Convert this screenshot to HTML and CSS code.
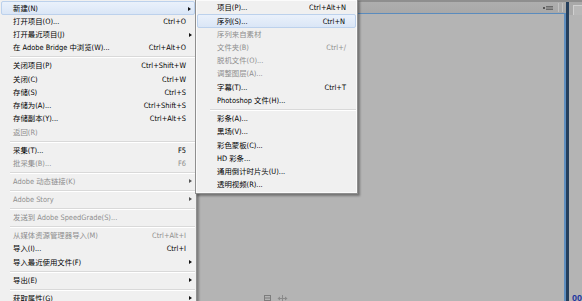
FILE: index.html
```html
<!DOCTYPE html>
<html lang="zh-CN">
<head>
<meta charset="utf-8">
<title>文件菜单</title>
<link rel="stylesheet" href="styles.css">
</head>
<body>
<div class="workspace">
  <div class="topstrip"></div>
  <div class="panels">
    <div class="main-panel">
      <div class="panel-head">
        <svg class="panel-menu" width="10" height="4" viewBox="0 0 10 4"><rect x="0" y="1" width="2" height="2" fill="#555"/><rect x="3" y="0" width="7" height="1" fill="#6a6a6a"/><rect x="3" y="1.5" width="7" height="1" fill="#6a6a6a"/><rect x="3" y="3" width="7" height="1" fill="#6a6a6a"/></svg>
        <div class="grip"></div>
      </div>
      <div class="panel-body">
        <div class="toolbar">
          <svg width="9" height="8" viewBox="0 0 9 8"><rect x="1.5" y="1.5" width="6" height="7" fill="none" stroke="#7c7c7c"/><line x1="1.5" y1="4" x2="7.5" y2="4" stroke="#7c7c7c"/><line x1="1.5" y1="6.5" x2="7.5" y2="6.5" stroke="#7c7c7c"/></svg>
          <svg width="11" height="8" viewBox="0 0 11 8"><line x1="5.5" y1="1" x2="5.5" y2="8" stroke="#8a8a8a"/><path d="M0.5 4.5 L3 2.5 L3 6.5 Z M10.5 4.5 L8 2.5 L8 6.5 Z" fill="#8a8a8a"/><line x1="2" y1="4.5" x2="9" y2="4.5" stroke="#8a8a8a"/></svg>
        </div>
      </div>
    </div>
    <div class="divider"></div>
    <div class="side-panel">
      <div class="side-head"><div class="tab"></div></div>
      <div class="side-body"><span class="timecode">00</span></div>
    </div>
  </div>
</div>

<div class="menu main-menu">
  <div class="item hl"><span class="label">新建(N)</span><span class="key"></span><span class="arrow"></span></div>
  <div class="item"><span class="label">打开项目(O)...</span><span class="key">Ctrl+O</span><span></span></div>
  <div class="item"><span class="label">打开最近项目(J)</span><span class="key"></span><span class="arrow"></span></div>
  <div class="item"><span class="label">在 Adobe Bridge 中浏览(W)...</span><span class="key">Ctrl+Alt+O</span><span></span></div>
  <div class="sep"></div>
  <div class="item"><span class="label">关闭项目(P)</span><span class="key">Ctrl+Shift+W</span><span></span></div>
  <div class="item"><span class="label">关闭(C)</span><span class="key">Ctrl+W</span><span></span></div>
  <div class="item"><span class="label">存储(S)</span><span class="key">Ctrl+S</span><span></span></div>
  <div class="item"><span class="label">存储为(A)...</span><span class="key">Ctrl+Shift+S</span><span></span></div>
  <div class="item"><span class="label">存储副本(Y)...</span><span class="key">Ctrl+Alt+S</span><span></span></div>
  <div class="item off"><span class="label">返回(R)</span><span class="key"></span><span></span></div>
  <div class="sep"></div>
  <div class="item"><span class="label">采集(T)...</span><span class="key">F5</span><span></span></div>
  <div class="item off"><span class="label">批采集(B)...</span><span class="key">F6</span><span></span></div>
  <div class="sep"></div>
  <div class="item off"><span class="label">Adobe 动态链接(K)</span><span class="key"></span><span class="arrow"></span></div>
  <div class="sep"></div>
  <div class="item off"><span class="label">Adobe Story</span><span class="key"></span><span class="arrow"></span></div>
  <div class="sep"></div>
  <div class="item off"><span class="label">发送到 Adobe SpeedGrade(S)...</span><span class="key"></span><span></span></div>
  <div class="sep"></div>
  <div class="item off"><span class="label">从媒体资源管理器导入(M)</span><span class="key">Ctrl+Alt+I</span><span></span></div>
  <div class="item"><span class="label">导入(I)...</span><span class="key">Ctrl+I</span><span></span></div>
  <div class="item"><span class="label">导入最近使用文件(F)</span><span class="key"></span><span class="arrow"></span></div>
  <div class="sep"></div>
  <div class="item"><span class="label">导出(E)</span><span class="key"></span><span class="arrow"></span></div>
  <div class="sep"></div>
  <div class="item"><span class="label">获取属性(G)</span><span class="key"></span><span class="arrow"></span></div>
</div>

<div class="menu sub-menu">
  <div class="item"><span class="label">项目(P)...</span><span class="key">Ctrl+Alt+N</span><span></span></div>
  <div class="item hl"><span class="label">序列(S)...</span><span class="key">Ctrl+N</span><span></span></div>
  <div class="item off"><span class="label">序列来自素材</span><span class="key"></span><span></span></div>
  <div class="item off"><span class="label">文件夹(B)</span><span class="key">Ctrl+/</span><span></span></div>
  <div class="item off"><span class="label">脱机文件(O)...</span><span class="key"></span><span></span></div>
  <div class="item off"><span class="label">调整图层(A)...</span><span class="key"></span><span></span></div>
  <div class="item"><span class="label">字幕(T)...</span><span class="key">Ctrl+T</span><span></span></div>
  <div class="item"><span class="label">Photoshop 文件(H)...</span><span class="key"></span><span></span></div>
  <div class="sep"></div>
  <div class="item"><span class="label">彩条(A)...</span><span class="key"></span><span></span></div>
  <div class="item"><span class="label">黑场(V)...</span><span class="key"></span><span></span></div>
  <div class="item"><span class="label">彩色蒙板(C)...</span><span class="key"></span><span></span></div>
  <div class="item"><span class="label">HD 彩条...</span><span class="key"></span><span></span></div>
  <div class="item"><span class="label">通用倒计时片头(U)...</span><span class="key"></span><span></span></div>
  <div class="item"><span class="label">透明视频(R)...</span><span class="key"></span><span></span></div>
</div>
</body>
</html>
```
FILE: styles.css
```css
html, body {
  margin: 0;
  padding: 0;
  width: 582px;
  height: 301px;
  overflow: hidden;
  background: #b4b4b4;
  font-family: "DejaVu Sans Condensed", "DejaVu Sans", "Noto Sans CJK SC", sans-serif;
  font-stretch: condensed;
  font-size: 7.4px;
}

.workspace {
  display: flex;
  flex-direction: column;
  height: 301px;
}

.topstrip {
  height: 2px;
  background: #8e8e8e;
}

.panels {
  flex: 1;
  display: flex;
  min-height: 0;
}

.main-panel {
  flex: 1;
  display: flex;
  flex-direction: column;
}

.panel-head {
  height: 11px;
  background: linear-gradient(#aeaeae, #a8a8a8);
  display: flex;
  align-items: center;
  justify-content: flex-end;
  gap: 5px;
  padding-right: 3px;
}

.panel-menu {
  margin-top: 1px;
}

.grip {
  width: 3px;
  height: 9px;
  border-left: 1px solid #c2c2c2;
  border-right: 1px solid #c2c2c2;
}

.panel-body {
  flex: 1;
  border-top: 1.5px solid #5a8bbd;
  border-right: 2px solid #5f8fc0;
  background: #b4b4b4;
  display: flex;
  flex-direction: column;
  justify-content: flex-end;
}

.toolbar {
  display: flex;
  gap: 5px;
  padding-left: 263px;
  height: 8px;
  margin-bottom: -1px;
}

.divider {
  width: 3px;
  background: #253f5c;
}

.side-panel {
  width: 13px;
  display: flex;
  flex-direction: column;
}

.side-head {
  height: 12.5px;
  background: #a9a9a9;
  display: flex;
  align-items: flex-end;
  padding-left: 4px;
}

.tab {
  width: 9px;
  height: 9px;
  border: 1px solid #d0d0d0;
  border-right: none;
  border-bottom: none;
  background: #b8b8b8;
}

.side-body {
  flex: 1;
  display: flex;
  flex-direction: column;
  justify-content: flex-end;
  padding-left: 3px;
}

.timecode {
  color: #1c35a0;
  font-family: "Liberation Sans", sans-serif;
  font-stretch: normal;
  font-weight: bold;
  font-size: 9px;
  line-height: 8px;
  margin-bottom: -1px;
}

/* menus */
.menu {
  position: absolute;
  background: #f0f0f0;
  box-sizing: border-box;
  color: #000;
}

.main-menu {
  left: 0;
  top: -1px;
  width: 197px;
  border-right: 1px solid #8f8f8f;
  border-top: 1px solid #8f8f8f;
  padding-top: 1.4px;
  box-shadow: 2px 2px 2px rgba(0, 0, 0, 0.3);
}

.sub-menu {
  left: 195px;
  top: -1px;
  width: 163px;
  border: 1px solid #8f8f8f;
  padding: 1.1px 0 1.3px;
  box-shadow: 2px 2px 2px rgba(0, 0, 0, 0.35), inset 0 0 0 1px #fbfbfb;
}

.item {
  display: grid;
  align-items: center;
  height: 13.25px;
  margin: 0 1px;
  box-sizing: border-box;
  white-space: nowrap;
  line-height: 13px;
}

.main-menu .item {
  grid-template-columns: 1fr auto 9px;
  padding-left: 12px;
}

.sub-menu .item {
  grid-template-columns: 1fr auto 10px;
  padding-left: 20px;
}

.item.hl {
  background: linear-gradient(#eaf1fb, #dae6f6);
  border: 1px solid #bcd1ec;
  border-radius: 2px;
}

.main-menu .item.hl {
  padding-left: 11px;
}

.sub-menu .item.hl {
  padding-left: 19px;
}

.item.off {
  color: #8e8e8e;
}

.arrow {
  justify-self: center;
  width: 0;
  height: 0;
  border-left: 3px solid #111;
  border-top: 2.5px solid transparent;
  border-bottom: 2.5px solid transparent;
}

.item.off .arrow {
  border-left-color: #555;
}

.sep {
  height: 4.8px;
  position: relative;
}

.sep::before {
  content: "";
  position: absolute;
  top: 2px;
  right: 1px;
  height: 0;
  border-top: 1px solid #d9d9d9;
  border-bottom: 1px solid #ffffff;
}

.main-menu .sep::before {
  left: 10px;
}

.sub-menu .sep::before {
  left: 14px;
}
```
